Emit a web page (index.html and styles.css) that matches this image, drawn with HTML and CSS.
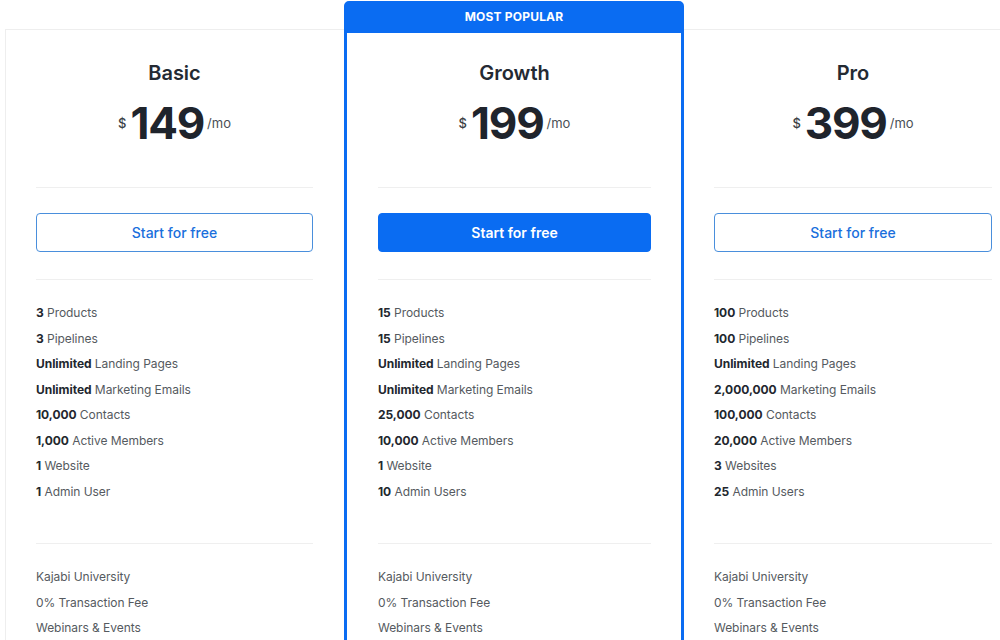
FILE: index.html
```html
<!DOCTYPE html>
<html>
<head>
<meta charset="utf-8">
<link rel="stylesheet" href="styles.css">
</head>
<body>
<div class="plans">
  <div class="card">
    <div class="body">
      <h2 class="title">Basic</h2>
      <div class="price"><span class="cur">$</span><span class="amt">149</span><span class="per">/mo</span></div>
      <hr class="rule rule-price">
      <a class="btn">Start for free</a>
      <hr class="rule rule-btn">
      <ul class="feats">
        <li><b>3</b> Products</li>
        <li><b>3</b> Pipelines</li>
        <li><b>Unlimited</b> Landing Pages</li>
        <li><b>Unlimited</b> Marketing Emails</li>
        <li><b>10,000</b> Contacts</li>
        <li><b>1,000</b> Active Members</li>
        <li><b>1</b> Website</li>
        <li><b>1</b> Admin User</li>
      </ul>
      <hr class="rule rule-feats">
      <ul class="feats extras">
        <li>Kajabi University</li>
        <li>0% Transaction Fee</li>
        <li>Webinars &amp; Events</li>
      </ul>
    </div>
  </div>
  <div class="card popular">
    <div class="badge">MOST POPULAR</div>
    <div class="body">
      <h2 class="title">Growth</h2>
      <div class="price"><span class="cur">$</span><span class="amt">199</span><span class="per">/mo</span></div>
      <hr class="rule rule-price">
      <a class="btn btn-solid">Start for free</a>
      <hr class="rule rule-btn">
      <ul class="feats">
        <li><b>15</b> Products</li>
        <li><b>15</b> Pipelines</li>
        <li><b>Unlimited</b> Landing Pages</li>
        <li><b>Unlimited</b> Marketing Emails</li>
        <li><b>25,000</b> Contacts</li>
        <li><b>10,000</b> Active Members</li>
        <li><b>1</b> Website</li>
        <li><b>10</b> Admin Users</li>
      </ul>
      <hr class="rule rule-feats">
      <ul class="feats extras">
        <li>Kajabi University</li>
        <li>0% Transaction Fee</li>
        <li>Webinars &amp; Events</li>
      </ul>
    </div>
  </div>
  <div class="card">
    <div class="body">
      <h2 class="title">Pro</h2>
      <div class="price"><span class="cur">$</span><span class="amt">399</span><span class="per">/mo</span></div>
      <hr class="rule rule-price">
      <a class="btn">Start for free</a>
      <hr class="rule rule-btn">
      <ul class="feats">
        <li><b>100</b> Products</li>
        <li><b>100</b> Pipelines</li>
        <li><b>Unlimited</b> Landing Pages</li>
        <li><b>2,000,000</b> Marketing Emails</li>
        <li><b>100,000</b> Contacts</li>
        <li><b>20,000</b> Active Members</li>
        <li><b>3</b> Websites</li>
        <li><b>25</b> Admin Users</li>
      </ul>
      <hr class="rule rule-feats">
      <ul class="feats extras">
        <li>Kajabi University</li>
        <li>0% Transaction Fee</li>
        <li>Webinars &amp; Events</li>
      </ul>
    </div>
  </div>
</div>
</body>
</html>
```

FILE: styles.css
```css
html, body {
  margin: 0;
  padding: 0;
  background: #fff;
  overflow: hidden;
  width: 1000px;
  height: 640px;
}
body {
  font-family: Inter, "Noto Sans", sans-serif;
  color: #222831;
}
.plans {
  display: flex;
  align-items: flex-start;
  padding: 1px 0 0 5px;
  box-sizing: border-box;
  width: 1000px;
  height: 640px;
  overflow: hidden;
}
.card {
  flex: 0 0 auto;
  box-sizing: border-box;
  width: 339px;
  margin-top: 28px;
  border: 1px solid #eeeeee;
  border-right: none;
  background: #fff;
  height: 700px;
}
.card:last-child {
  border-left: none;
  width: 338px;
  border-right: 1px solid #eee;
}
.popular {
  width: 340px;
  margin-top: 0;
  border: 3px solid #0a6cf2;
  border-radius: 5px 5px 0 0;
  position: relative;
  z-index: 1;
}
.badge {
  background: #0a6cf2;
  color: #fff;
  font-size: 12px;
  font-weight: 700;
  letter-spacing: 0.2px;
  text-align: center;
  height: 29px;
  line-height: 26px;
}
.body {
  padding: 31px 31px 0 30px;
  display: flex;
  flex-direction: column;
}
.popular .body {
  padding: 28px 30px 0 31px;
}
.card:last-child .body {
  padding-left: 30px;
  padding-right: 29px;
}
.title {
  margin: 0;
  font-size: 20px;
  line-height: 24px;
  font-weight: 600;
  text-align: center;
  color: #242a33;
}
.price {
  margin-top: 13px;
  height: 50px;
  display: flex;
  justify-content: center;
  align-items: center;
  color: #1f242c;
}
.cur {
  font-size: 13px;
  font-weight: 500;
  margin-right: 4px;
  color: #3a3f45;
}
.amt {
  font-size: 44px;
  font-weight: 700;
  letter-spacing: -1.2px;
  line-height: 50px;
}
.per {
  font-size: 13px;
  color: #4a4f55;
  margin-left: 3px;
}
.rule {
  border: 0;
  height: 1px;
  background: #efefef;
  margin: 0;
}
.rule-price { margin-top: 39px; }
.rule-btn { margin-top: 27px; }
.rule-feats { margin-top: 39px; }
.btn {
  margin-top: 25px;
  box-sizing: border-box;
  height: 39px;
  display: flex;
  align-items: center;
  justify-content: center;
  border: 1px solid #4a8fdc;
  border-radius: 4px;
  color: #1a6fdc;
  font-size: 14px;
  font-weight: 500;
}
.btn-solid {
  background: #0a6cf2;
  border-color: #0a6cf2;
  color: #fff;
  font-weight: 600;
}
.feats {
  list-style: none;
  margin: 20px 0 0;
  padding: 0;
}
.feats li {
  font-size: 12px;
  line-height: 25.5px;
  color: #555a60;
  white-space: nowrap;
  letter-spacing: -0.05px;
}
.feats b {
  font-weight: 700;
  color: #22272e;
}
.extras {
  margin-top: 20px;
}
```
